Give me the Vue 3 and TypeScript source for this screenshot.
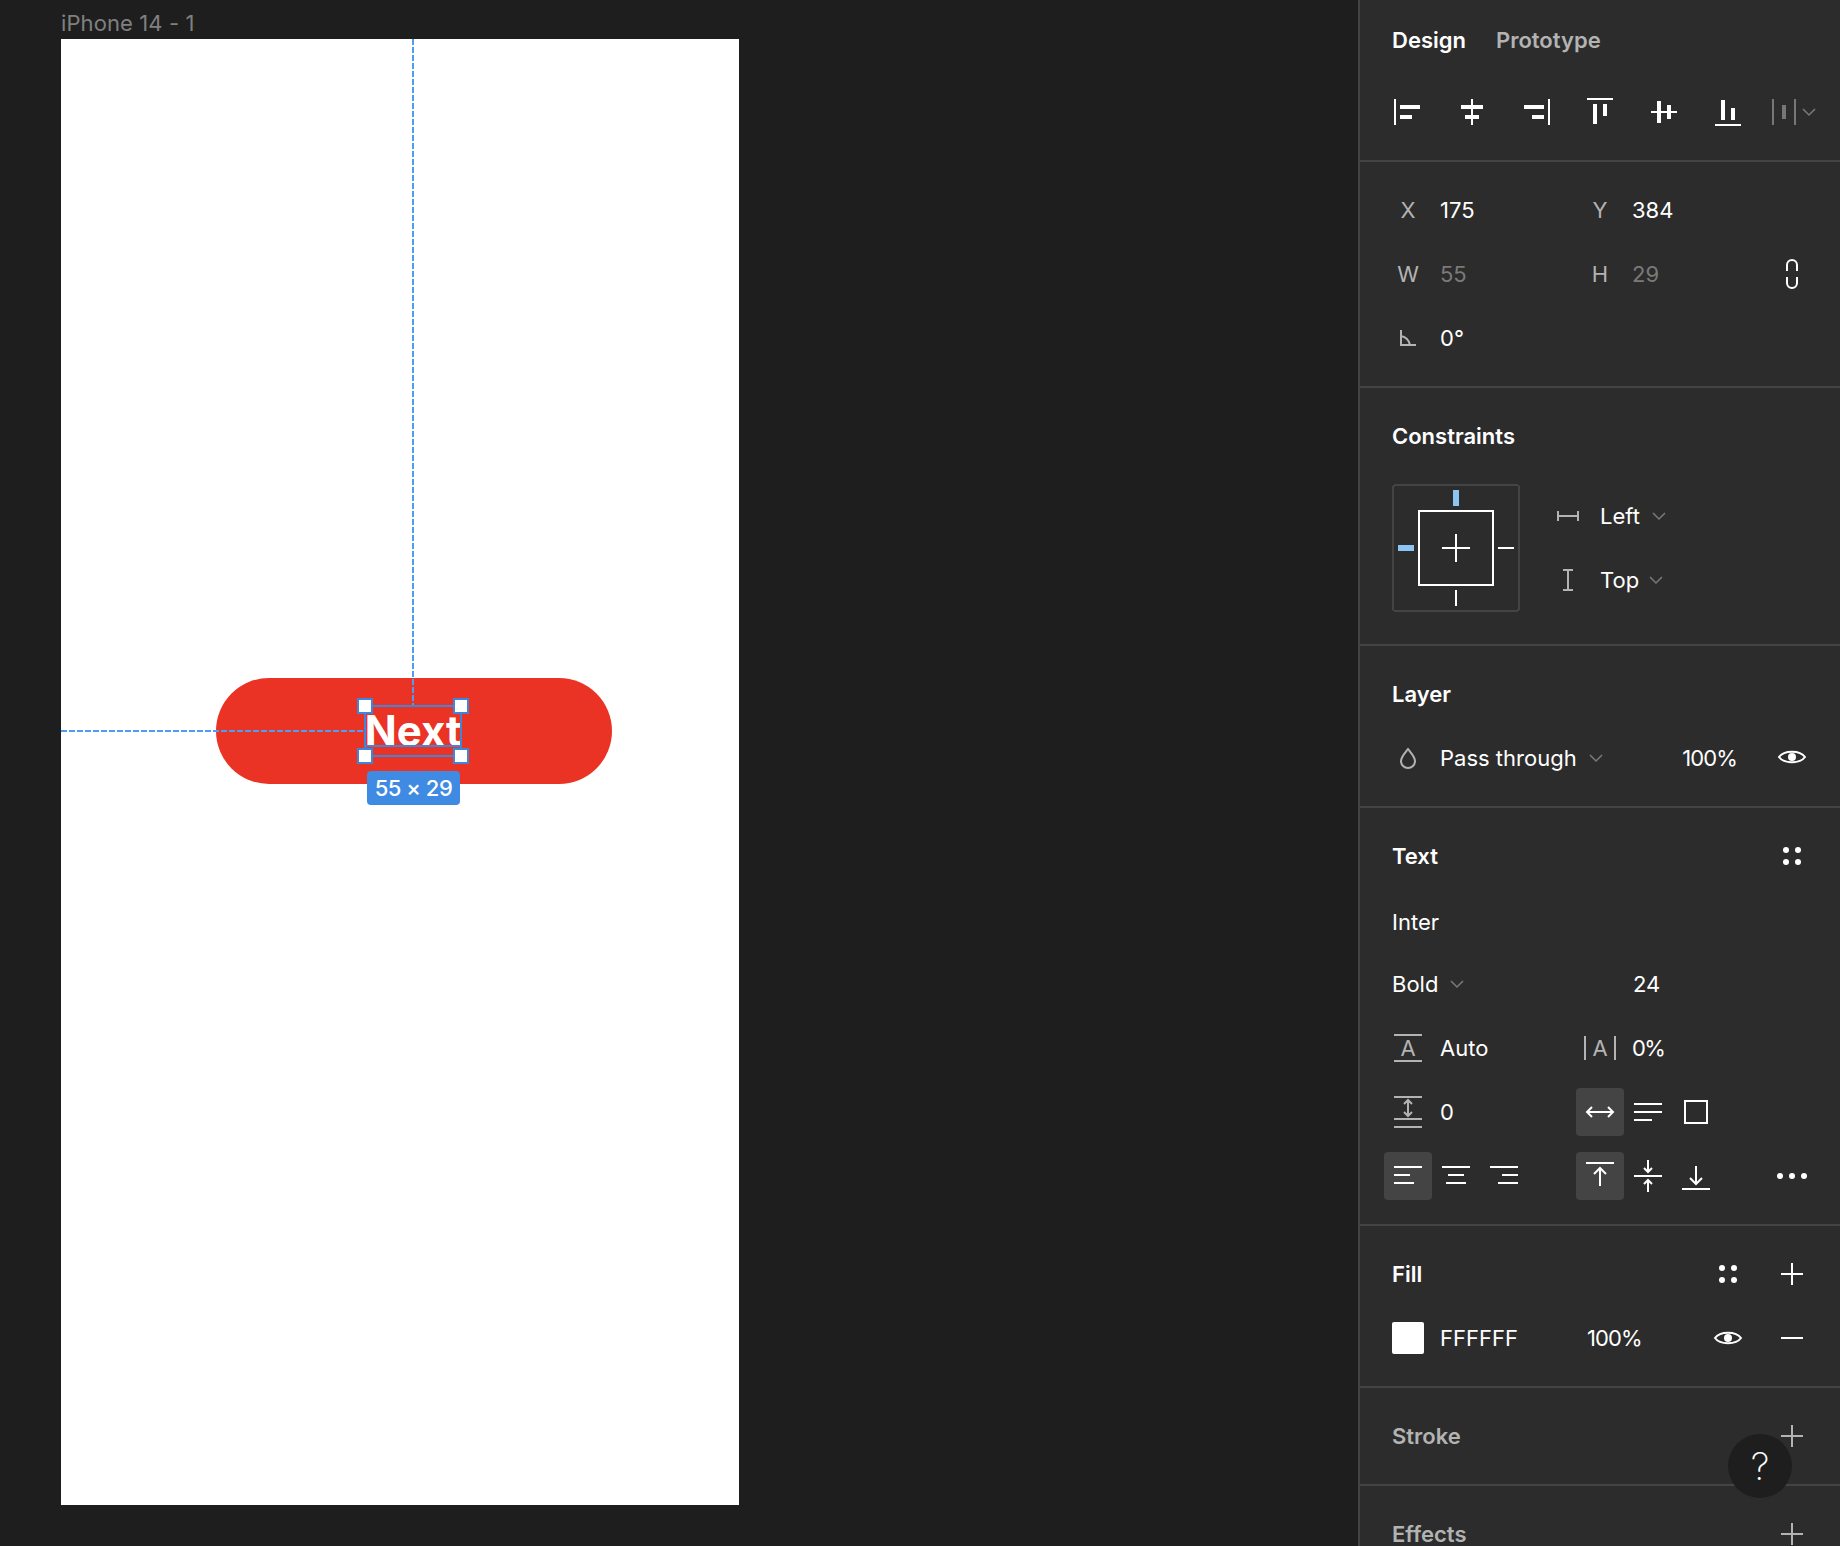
<template>
  <div class="editor">
    <div class="canvas">
      <div class="frame-name">iPhone 14 - 1</div>
      <div class="frame">
        <div class="guide guide-v"></div>
        <div class="guide guide-h"></div>
        <div class="button">
          <span class="button-text">Next</span>
          <div class="selection">
            <i class="baseline"></i>
            <i class="handle tl"></i>
            <i class="handle tr"></i>
            <i class="handle bl"></i>
            <i class="handle br"></i>
          </div>
          <div class="size-tag">55 × 29</div>
        </div>
      </div>
    </div>

    <aside class="panel">
      <section class="section tabs-section">
        <div class="tabs">
          <span class="tab active">Design</span>
          <span class="tab">Prototype</span>
        </div>
        <div class="align-bar">
          <svg v-for="(icon, i) in alignIcons" :key="i" class="ic" viewBox="0 0 48 48" shape-rendering="crispEdges">
            <rect v-for="(r, j) in icon" :key="j" :x="r[0]" :y="r[1]" :width="r[2]" :height="r[3]" fill="#fff" />
          </svg>
          <svg class="distribute" width="48" height="48" viewBox="0 0 48 48">
            <g fill="#777" shape-rendering="crispEdges">
              <rect x="12" y="11" width="2" height="26" />
              <rect x="22" y="17" width="4" height="14" />
              <rect x="34" y="11" width="2" height="26" />
            </g>
          </svg>
          <svg class="distribute-chev" width="14" height="10" viewBox="0 0 14 10"><path d="M1 2l6 6 6-6" /></svg>
        </div>
      </section>

      <section class="section">
        <div class="row">
          <span class="label">X</span><span>175</span>
          <span class="label">Y</span><span>384</span>
        </div>
        <div class="row">
          <span class="label">W</span><span class="muted">55</span>
          <span class="label">H</span><span class="muted">29</span>
          <svg class="ic" viewBox="0 0 48 48">
            <path d="M19 21v-6a5 5 0 0 1 10 0v6M19 27v6a5 5 0 0 0 10 0v-6" fill="none" stroke="#fff" stroke-width="2" />
          </svg>
        </div>
        <div class="row">
          <svg class="ic" viewBox="0 0 48 48">
            <path d="M17 16v15h15M17 22c5 1 8 4 9 9" fill="none" stroke="#b3b3b3" stroke-width="2" />
          </svg>
          <span>0°</span>
        </div>
      </section>

      <section class="section constraints">
        <div class="section-head"><span class="title">Constraints</span></div>
        <div class="constraint-body">
          <svg class="constraint-box" width="128" height="128" viewBox="0 0 128 128" shape-rendering="crispEdges">
            <rect x="1" y="1" width="126" height="126" rx="3" fill="none" stroke="#444" stroke-width="2" />
            <rect x="27" y="27" width="74" height="74" fill="none" stroke="#fff" stroke-width="2" />
            <path d="M50 64h28M64 50v28M106 64h16M64 106v16" stroke="#fff" stroke-width="2" />
            <rect x="61" y="6" width="6" height="16" fill="#8cc4f4" />
            <rect x="6" y="61" width="16" height="6" fill="#8cc4f4" />
          </svg>
          <div class="constraint-list">
            <div class="constraint-row">
              <svg class="ic" viewBox="0 0 48 48">
                <path d="M14 19v10M34 19v10M14 24h20" fill="none" stroke="#b3b3b3" stroke-width="2" />
              </svg>
              <span>Left</span>
              <svg class="chev" width="14" height="10" viewBox="0 0 14 10"><path d="M1 2l6 6 6-6" /></svg>
            </div>
            <div class="constraint-row">
              <svg class="ic" viewBox="0 0 48 48">
                <path d="M19 14h10M19 34h10M24 14v20" fill="none" stroke="#b3b3b3" stroke-width="2" />
              </svg>
              <span class="top-label">Top</span>
              <svg class="chev" width="14" height="10" viewBox="0 0 14 10"><path d="M1 2l6 6 6-6" /></svg>
            </div>
          </div>
        </div>
      </section>

      <section class="section">
        <div class="section-head"><span class="title">Layer</span></div>
        <div class="row layer-row">
          <svg class="ic" viewBox="0 0 48 48">
            <path d="M24 15c4 5 7 8 7 12a7 7 0 0 1-14 0c0-4 3-7 7-12z" fill="none" stroke="#b3b3b3" stroke-width="2" />
          </svg>
          <span class="with-chev">
            Pass through
            <svg class="chev" width="14" height="10" viewBox="0 0 14 10"><path d="M1 2l6 6 6-6" /></svg>
          </span>
          <span class="layer-opacity pct">100%</span>
          <svg class="ic" viewBox="0 0 48 48">
            <path d="M11 23c5-7 21-7 26 0-5 7-21 7-26 0z" fill="none" stroke="#fff" stroke-width="2" />
            <circle cx="24" cy="23" r="4" fill="#fff" />
          </svg>
        </div>
      </section>

      <section class="section">
        <div class="section-head">
          <span class="title">Text</span>
          <div class="head-actions">
            <svg class="ic" viewBox="0 0 48 48">
              <circle v-for="(d, i) in styleDots" :key="i" :cx="d[0]" :cy="d[1]" r="3" fill="#fff" />
            </svg>
          </div>
        </div>
        <div class="row"><span class="wide font-name">Inter</span></div>
        <div class="row">
          <span class="wide with-chev">
            Bold
            <svg class="chev" width="14" height="10" viewBox="0 0 14 10"><path d="M1 2l6 6 6-6" /></svg>
          </span>
          <span class="font-size">24</span>
        </div>
        <div class="row">
          <svg class="ic" viewBox="0 0 48 48">
            <path d="M10 11h28M10 37h28" stroke="#b3b3b3" stroke-width="2" />
            <text x="24" y="32" class="ic-text">A</text>
          </svg>
          <span>Auto</span>
          <svg class="ic" viewBox="0 0 48 48">
            <path d="M9 12v24M39 12v24" stroke="#b3b3b3" stroke-width="2" />
            <text x="24" y="32" class="ic-text">A</text>
          </svg>
          <span class="pct-short">0%</span>
        </div>
        <div class="row">
          <svg class="ic" viewBox="0 0 48 48">
            <path d="M10 9h28M10 31h28M10 39h28" stroke="#b3b3b3" stroke-width="2" />
            <path d="M24 12v16M20 16l4-4 4 4M20 24l4 4 4-4" fill="none" stroke="#b3b3b3" stroke-width="2" />
          </svg>
          <span>0</span>
          <div class="tool-group">
            <span class="tool on">
              <svg class="ic" viewBox="0 0 48 48">
                <path d="M11 24h26M16 19l-5 5 5 5M32 19l5 5-5 5" fill="none" stroke="#fff" stroke-width="2" />
              </svg>
            </span>
            <span class="tool">
              <svg class="ic" viewBox="0 0 48 48">
                <path d="M10 16h28M10 24h28M10 32h18" stroke="#fff" stroke-width="2" />
              </svg>
            </span>
            <span class="tool">
              <svg class="ic" viewBox="0 0 48 48">
                <rect x="13" y="13" width="22" height="22" fill="none" stroke="#fff" stroke-width="2" />
              </svg>
            </span>
          </div>
        </div>
        <div class="row">
          <div class="tool-group first">
            <span class="tool on">
              <svg class="ic" viewBox="0 0 48 48"><path d="M10 15h28M10 23h16M10 31h20" stroke="#fff" stroke-width="2" /></svg>
            </span>
            <span class="tool">
              <svg class="ic" viewBox="0 0 48 48"><path d="M10 15h28M16 23h16M14 31h20" stroke="#fff" stroke-width="2" /></svg>
            </span>
            <span class="tool">
              <svg class="ic" viewBox="0 0 48 48"><path d="M10 15h28M22 23h16M18 31h20" stroke="#fff" stroke-width="2" /></svg>
            </span>
          </div>
          <div class="tool-group">
            <span class="tool on">
              <svg class="ic" viewBox="0 0 48 48">
                <path d="M10 11h28M24 16v18M18 22l6-6 6 6" fill="none" stroke="#fff" stroke-width="2" />
              </svg>
            </span>
            <span class="tool">
              <svg class="ic" viewBox="0 0 48 48">
                <path d="M10 24h28M24 8v12M20 16l4 4 4-4M24 28v12M20 32l4-4 4 4" fill="none" stroke="#fff" stroke-width="2" />
              </svg>
            </span>
            <span class="tool">
              <svg class="ic" viewBox="0 0 48 48">
                <path d="M10 37h28M24 14v18M18 26l6 6 6-6" fill="none" stroke="#fff" stroke-width="2" />
              </svg>
            </span>
          </div>
          <svg class="ic more" viewBox="0 0 48 48">
            <circle cx="12" cy="24" r="3" fill="#fff" />
            <circle cx="24" cy="24" r="3" fill="#fff" />
            <circle cx="36" cy="24" r="3" fill="#fff" />
          </svg>
        </div>
      </section>

      <section class="section">
        <div class="section-head">
          <span class="title">Fill</span>
          <div class="head-actions">
            <svg class="ic" viewBox="0 0 48 48">
              <circle v-for="(d, i) in styleDots" :key="i" :cx="d[0]" :cy="d[1]" r="3" fill="#fff" />
            </svg>
            <svg class="ic" viewBox="0 0 48 48"><path d="M13 24h22M24 13v22" stroke="#fff" stroke-width="2" /></svg>
          </div>
        </div>
        <div class="row fill-row">
          <span class="swatch-cell"><i class="swatch"></i></span>
          <span>FFFFFF</span>
          <span class="pct">100%</span>
          <svg class="ic" viewBox="0 0 48 48">
            <path d="M11 24c5-7 21-7 26 0-5 7-21 7-26 0z" fill="none" stroke="#fff" stroke-width="2" />
            <circle cx="24" cy="24" r="4" fill="#fff" />
          </svg>
          <svg class="ic" viewBox="0 0 48 48"><path d="M13 24h22" stroke="#fff" stroke-width="2" /></svg>
        </div>
      </section>

      <section class="section">
        <div class="section-head">
          <span class="title dim">Stroke</span>
          <div class="head-actions">
            <svg class="ic" viewBox="0 0 48 48"><path d="M13 24h22M24 13v22" stroke="#b3b3b3" stroke-width="2" /></svg>
          </div>
        </div>
      </section>

      <section class="section">
        <div class="section-head">
          <span class="title dim">Effects</span>
          <div class="head-actions">
            <svg class="ic" viewBox="0 0 48 48"><path d="M13 24h22M24 13v22" stroke="#b3b3b3" stroke-width="2" /></svg>
          </div>
        </div>
      </section>

      <div class="help">?</div>
    </aside>
  </div>
</template>

<script setup lang="ts">
type Box = [number, number, number, number]

// x, y, w, h inside a 48px cell
const alignIcons: Box[][] = [
  [[10, 11, 2, 26], [16, 17, 20, 4], [16, 27, 12, 4]],
  [[23, 11, 2, 26], [13, 17, 22, 4], [17, 27, 14, 4]],
  [[36, 11, 2, 26], [12, 17, 20, 4], [20, 27, 12, 4]],
  [[11, 10, 26, 2], [17, 16, 4, 20], [27, 16, 4, 12]],
  [[11, 23, 26, 2], [17, 13, 4, 22], [27, 17, 4, 14]],
  [[11, 36, 26, 2], [17, 12, 4, 20], [27, 20, 4, 12]],
]

const styleDots: [number, number][] = [
  [18, 18],
  [30, 18],
  [18, 30],
  [30, 30],
]
</script>

<style>
body {
  background: #1e1e1e;
}
</style>

<style scoped>
.editor {
  display: flex;
  width: 1840px;
  height: 1546px;
  overflow: hidden;
  font-family: Inter, "Liberation Sans", sans-serif;
  font-size: 22px;
  color: #fff;
}

.canvas {
  flex: 1;
  padding-left: 61px;
  background: #1e1e1e;
}

.frame-name {
  height: 39px;
  padding-top: 8px;
  box-sizing: border-box;
  line-height: 30px;
  letter-spacing: 0.1px;
  color: #808080;
}

.frame {
  position: relative;
  width: 678px;
  height: 1466px;
  background: #fff;
}

.guide {
  position: absolute;
  z-index: 2;
}

.guide-v {
  left: 351px;
  top: 0;
  width: 2px;
  height: 666px;
  background: repeating-linear-gradient(to bottom, #4a9ff5 0 6px, transparent 6px 8px);
}

.guide-h {
  left: 0;
  top: 691px;
  width: 303px;
  height: 2px;
  background: repeating-linear-gradient(to right, #4a9ff5 0 6px, transparent 6px 8px);
}

.button {
  position: absolute;
  left: 155px;
  top: 639px;
  display: flex;
  align-items: center;
  justify-content: center;
  width: 396px;
  height: 106px;
  border-radius: 53px;
  background: #ea3324;
}

.button-text {
  font-size: 42px;
  font-weight: 700;
  line-height: 50px;
  margin-right: 2px;
}

.selection {
  position: absolute;
  left: 148px;
  top: 27px;
  width: 98px;
  height: 52px;
  box-sizing: border-box;
  border: 2px solid #4085d8;
}

.baseline {
  position: absolute;
  left: 0;
  right: 0;
  top: 38px;
  height: 2px;
  background: #4085d8;
}

.handle {
  position: absolute;
  width: 16px;
  height: 16px;
  box-sizing: border-box;
  border: 2px solid #4085d8;
  background: #fff;
}

.tl {
  left: -9px;
  top: -9px;
}

.tr {
  right: -9px;
  top: -9px;
}

.bl {
  left: -9px;
  bottom: -9px;
}

.br {
  right: -9px;
  bottom: -9px;
}

.size-tag {
  position: absolute;
  left: 151px;
  top: 93px;
  width: 93px;
  height: 34px;
  border-radius: 4px;
  background: #3f8ae2;
  font-size: 22px;
  font-weight: 500;
  letter-spacing: -0.5px;
  line-height: 34px;
  text-align: center;
}

.panel {
  position: relative;
  box-sizing: border-box;
  width: 482px;
  flex: none;
  border-left: 2px solid #444;
  background: #2c2c2c;
}

.section {
  padding: 16px 0;
  border-bottom: 2px solid #444;
}

.tabs-section {
  height: 152px;
  padding: 8px 0 0;
  box-sizing: content-box;
}

.tabs {
  display: flex;
  gap: 30px;
  align-items: center;
  height: 64px;
  padding-left: 32px;
  font-weight: 600;
}

.tab {
  color: #b3b3b3;
}

.tab.active {
  color: #fff;
}

.align-bar {
  display: flex;
  align-items: center;
  margin-top: 16px;
  padding-left: 24px;
}

.align-bar .ic {
  margin-right: 16px;
}

.distribute {
  flex: none;
  margin-left: -8px;
  margin-right: -6px;
}

.distribute-chev path,
.chev path {
  fill: none;
  stroke: #7a7a7a;
  stroke-width: 1.5;
}

.ic {
  display: block;
  width: 48px;
  height: 48px;
  flex: none;
}

.ic-text {
  fill: #b3b3b3;
  font-size: 22px;
  text-anchor: middle;
}

.section-head {
  display: flex;
  align-items: center;
  height: 64px;
  padding: 0 24px 0 32px;
}

.title {
  font-weight: 600;
}

.title.dim {
  color: #b3b3b3;
}

.head-actions {
  display: flex;
  gap: 16px;
  margin-left: auto;
}

.row {
  display: grid;
  grid-template-columns: 56px 136px 56px 136px 48px;
  align-items: center;
  height: 64px;
  padding-left: 24px;
}

.label {
  width: 48px;
  color: #b3b3b3;
  text-align: center;
}

.muted {
  color: #7a7a7a;
}

.wide {
  grid-column: 1 / 4;
  padding-left: 8px;
}

.font-name {
  padding-top: 4px;
}

.font-size {
  grid-column: 4;
  padding-left: 1px;
}

.pct {
  letter-spacing: -0.9px;
}

.pct-short {
  letter-spacing: -1.7px;
}

.with-chev {
  display: flex;
  align-items: center;
  gap: 12px;
}

.chev {
  flex: none;
}

.constraints {
  padding-bottom: 32px;
}

.constraint-body {
  display: flex;
  gap: 24px;
  margin-top: 16px;
  padding-left: 32px;
}

.constraint-box {
  display: block;
}

.constraint-row {
  display: flex;
  align-items: center;
  height: 64px;
}

.constraint-row span {
  margin-left: 8px;
  margin-right: 12px;
}

.constraint-row .top-label {
  margin-right: 10px;
}

.layer-row {
  grid-template-columns: 56px 1fr auto 48px;
  padding-right: 24px;
}

.layer-opacity {
  margin-right: 31px;
}

.tool-group {
  display: flex;
  grid-column: 3 / 5;
}

.tool-group.first {
  grid-column: 1 / 3;
}

.tool {
  width: 48px;
  height: 48px;
  border-radius: 4px;
}

.tool.on {
  background: #444;
}

.more {
  grid-column: 5;
}

.fill-row {
  grid-template-columns: 56px 147px 117px 48px 48px;
}

.fill-row .ic:last-child {
  margin-left: 16px;
}

.swatch-cell {
  display: block;
  padding-left: 8px;
}

.swatch {
  display: block;
  width: 32px;
  height: 32px;
  border-radius: 2px;
  background: #fff;
}

.help {
  position: absolute;
  top: 1434px;
  right: 48px;
  width: 64px;
  height: 64px;
  border-radius: 50%;
  background: #1e1e1e;
  font-size: 38px;
  font-weight: 200;
  line-height: 64px;
  text-align: center;
}
</style>
